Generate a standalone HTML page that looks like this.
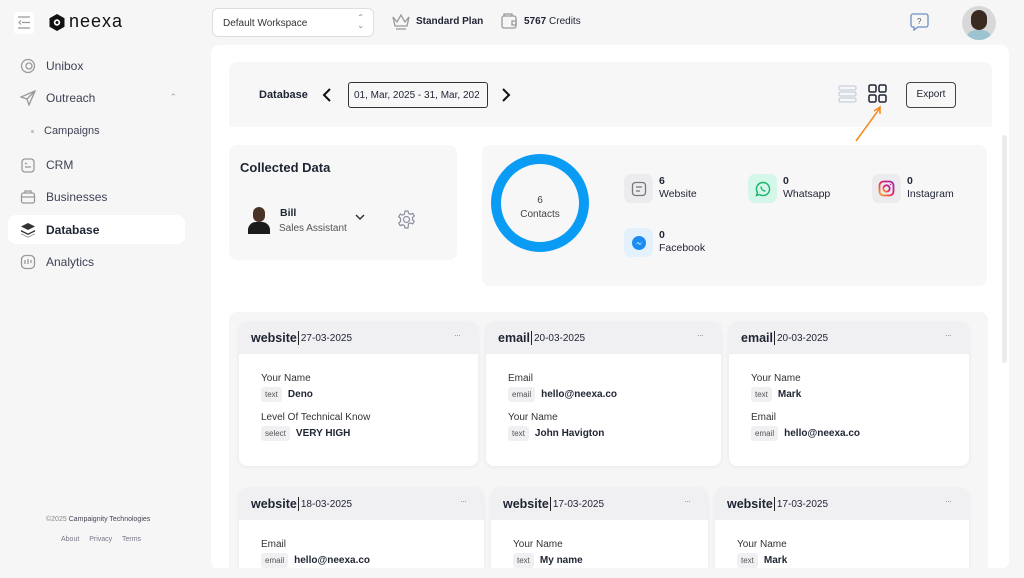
<!DOCTYPE html>
<html><head><meta charset="utf-8"><style>
*{box-sizing:border-box;margin:0;padding:0}
body{width:1024px;height:575px;overflow:hidden;background:#f6f6f7;font-family:"Liberation Sans",sans-serif;color:#1f2433;position:relative}
.a{position:absolute}
.nav{position:absolute;left:8px;width:177px;height:29px;display:flex;align-items:center;font-size:12px;color:#3d4254}
.nav svg{margin-left:12px;margin-right:10px}
.card{position:absolute;background:#fff;border-radius:8px;box-shadow:0 1px 4px rgba(0,0,0,.06);overflow:hidden}
.ch{height:32px;background:#f0f0f2;display:flex;align-items:center;padding-left:12px;font-size:12px;position:relative}
.ch b{font-weight:bold;font-size:12.5px;border-right:1.5px solid #222;padding-right:1px;margin-right:2px}
.ch span{font-size:10px}
.ch i{position:absolute;right:18px;top:8px;font-style:normal;color:#999;font-size:9px;letter-spacing:-1px}
.lb{font-size:10px;color:#333;margin:0 0 3px 22px}
.vl{margin-left:22px;display:flex;align-items:center;font-size:10px;font-weight:bold;margin-bottom:10px}
.tg{background:#f0f0f2;border-radius:3px;font-size:8px;font-weight:normal;color:#555;padding:3px 4px;margin-right:6px}
.st{position:absolute;display:flex}
.st .ic{width:29px;height:29px;border-radius:7px;display:flex;align-items:center;justify-content:center;margin-right:6px}
.st div.t{font-size:10.5px;line-height:13px;margin-top:1px}
</style></head><body>
<!-- top bar -->
<div class="a" style="left:14px;top:12px;width:20px;height:22px;background:#fff;border-radius:3px"></div>
<svg class="a" style="left:17px;top:16px" width="14" height="13" viewBox="0 0 14 13" fill="none" stroke="#999" stroke-width="1.2"><path d="M1 1h12M5 6.5h8M1 12h12M4 4.5L2 6.5l2 2"/></svg>
<svg class="a" style="left:48px;top:13px" width="18" height="19" viewBox="0 0 18 19"><path d="M9 1l7.5 4.2v8.6L9 18l-7.5-4.2V5.2z" fill="#111"/><circle cx="9" cy="9.5" r="3.2" fill="#fff"/><circle cx="9" cy="9.5" r="1.5" fill="#111"/></svg>
<div class="a" style="left:69px;top:11px;font-size:18px;letter-spacing:1px;color:#111">neexa</div>
<div class="a" style="left:212px;top:8px;width:162px;height:29px;border:1px solid #ddd;border-radius:6px;background:#fff;font-size:10px;color:#333;padding:9px 10px">Default Workspace<span style="position:absolute;right:9px;top:5px;font-size:8px;color:#888;line-height:8px">⌃<br>⌄</span></div>
<svg class="a" style="left:391px;top:13px" width="20" height="18" viewBox="0 0 20 18" fill="none" stroke="#999" stroke-width="1.3"><path d="M2 4l4 5 4-7 4 7 4-5-2 9H4z"/><path d="M5 16h10"/></svg>
<div class="a" style="left:416px;top:16px;font-size:10px;font-weight:bold">Standard Plan</div>
<svg class="a" style="left:500px;top:12px" width="18" height="18" viewBox="0 0 18 18" fill="none" stroke="#999" stroke-width="1.3"><rect x="2" y="4" width="14" height="12" rx="2"/><path d="M4 4V2h8v2M12 9h4v4h-4z"/></svg>
<div class="a" style="left:524px;top:16px;font-size:10px"><b>5767</b> Credits</div>
<svg class="a" style="left:910px;top:13px" width="19" height="18" viewBox="0 0 19 18" fill="none" stroke="#6d8fc8" stroke-width="1.3"><path d="M3 1h13a2 2 0 012 2v9a2 2 0 01-2 2H8l-4 3v-3H3a2 2 0 01-2-2V3a2 2 0 012-2z"/><text x="7" y="11" font-size="8" fill="#555" stroke="none" font-family="Liberation Sans">?</text></svg>
<div class="a" style="left:962px;top:6px;width:34px;height:34px;border-radius:50%;background:#d8d8d8;overflow:hidden"><div style="position:absolute;left:9px;top:4px;width:16px;height:20px;border-radius:8px;background:#3a2a22"></div><div style="position:absolute;left:4px;top:24px;width:26px;height:14px;border-radius:10px 10px 0 0;background:#9cc3cf"></div></div>
<!-- sidebar -->
<div class="nav" style="top:51px"><svg width="16" height="16" fill="none" stroke="#999" stroke-width="1.3"><circle cx="8" cy="8" r="6.5"/><circle cx="9" cy="8" r="3"/></svg>Unibox</div>
<div class="nav" style="top:83px"><svg width="16" height="16" fill="none" stroke="#999" stroke-width="1.3"><path d="M15 1L1 7l6 2 2 6z M7 9l8-8"/></svg>Outreach<span style="margin-left:auto;margin-right:8px;color:#aaa;font-size:9px">⌃</span></div>
<div class="a" style="left:31px;top:130px;width:3px;height:3px;border-radius:50%;background:#bbb"></div>
<div class="a" style="left:44px;top:125px;font-size:11px;color:#3d4254">Campaigns</div>
<div class="nav" style="top:150px"><svg width="16" height="16" fill="none" stroke="#999" stroke-width="1.3"><rect x="2" y="2" width="12" height="13" rx="3"/><path d="M5 10h6M5 6l2 1"/></svg>CRM</div>
<div class="nav" style="top:182px"><svg width="16" height="16" fill="none" stroke="#999" stroke-width="1.3"><rect x="1.5" y="4" width="13" height="10" rx="2"/><path d="M5 4V2h6v2M1.5 8h13"/></svg>Businesses</div>
<div class="nav" style="top:215px;background:#fff;border-radius:8px;font-weight:bold;color:#1f2433"><svg width="16" height="16" fill="#333"><path d="M8 1l7 3.5L8 8 1 4.5z"/><path d="M1 8l7 3.5L15 8v1.5L8 13 1 9.5z"/><path d="M1 11.5L8 15l7-3.5V12l-7 3.5L1 12z"/></svg>Database</div>
<div class="nav" style="top:247px"><svg width="16" height="16" fill="none" stroke="#999" stroke-width="1.3"><rect x="1.5" y="1.5" width="13" height="13" rx="4"/><path d="M5 6v4M8 5v5M11 6v3"/></svg>Analytics</div>
<div class="a" style="left:46px;top:516px;font-size:7px;color:#888">©2025 <span style="color:#445">Campaignity Technologies</span></div>
<div class="a" style="left:61px;top:536px;font-size:7px;color:#778;word-spacing:8px">About Privacy Terms</div>
<!-- main panel -->
<div class="a" style="left:211px;top:45px;width:798px;height:524px;background:#fff;border-radius:8px"></div>
<div class="a" style="left:229px;top:62px;width:763px;height:65px;background:#f7f7f8;border-radius:8px 8px 0 0"></div>
<div class="a" style="left:259px;top:89px;font-size:11px;font-weight:bold">Database</div>
<svg class="a" style="left:322px;top:87px" width="10" height="16" fill="none" stroke="#111" stroke-width="2"><path d="M8 2L2 8l6 6"/></svg>
<div class="a" style="left:348px;top:82px;width:140px;height:26px;border:1px solid #333;border-radius:3px;font-size:10px;padding:7px 5px;white-space:nowrap;overflow:hidden">01, Mar, 2025 - 31, Mar, 202</div>
<svg class="a" style="left:501px;top:87px" width="10" height="16" fill="none" stroke="#111" stroke-width="2"><path d="M2 2l6 6-6 6"/></svg>
<svg class="a" style="left:838px;top:85px" width="20" height="18" fill="none" stroke="#c9d0dc" stroke-width="1.3"><rect x="1" y="1" width="17" height="4" rx="1.5"/><rect x="1" y="7" width="17" height="4" rx="1.5"/><rect x="1" y="13" width="17" height="4" rx="1.5"/></svg>
<svg class="a" style="left:868px;top:84px" width="20" height="20" fill="none" stroke="#1f2433" stroke-width="1.5"><rect x="1" y="1" width="7" height="7" rx="1.5"/><rect x="11" y="1" width="7" height="7" rx="1.5"/><rect x="1" y="11" width="7" height="7" rx="1.5"/><rect x="11" y="11" width="7" height="7" rx="1.5"/></svg>
<div class="a" style="left:906px;top:82px;width:50px;height:26px;border:1px solid #444;border-radius:4px;font-size:10px;text-align:center;line-height:24px">Export</div>
<svg class="a" style="left:850px;top:103px" width="35" height="40" fill="none" stroke="#f28a1c" stroke-width="1.5"><path d="M6 38L30 5M24 8l6-4 0 7"/></svg>
<!-- collected data -->
<div class="a" style="left:229px;top:145px;width:228px;height:115px;background:#f7f7f8;border-radius:8px"></div>
<div class="a" style="left:240px;top:160px;font-size:13px;font-weight:bold">Collected Data</div>
<div class="a" style="left:247px;top:207px;width:24px;height:27px;overflow:hidden"><div style="position:absolute;left:6px;top:0;width:12px;height:15px;border-radius:6px;background:#4a3226"></div><div style="position:absolute;left:1px;top:15px;width:22px;height:14px;border-radius:8px 8px 0 0;background:#1b1b1b"></div></div>
<div class="a" style="left:280px;top:207px;font-size:10.5px;font-weight:bold">Bill</div>
<div class="a" style="left:279px;top:223px;font-size:10px;color:#555">Sales Assistant</div>
<svg class="a" style="left:355px;top:214px" width="10" height="7" fill="none" stroke="#333" stroke-width="1.5"><path d="M1 1l4 4 4-4"/></svg>
<svg class="a" style="left:397px;top:210px" width="19" height="19" fill="none" stroke="#8a8fa0" stroke-width="1.2"><circle cx="9.5" cy="9.5" r="3"/><path d="M8 1h3l.5 2.3 2 1 2.2-1 1.6 2.6-1.8 1.6v2.2l1.8 1.6-1.6 2.6-2.2-1-2 1L11 18H8l-.5-2.3-2-1-2.2 1-1.6-2.6 1.8-1.6V8.3L1.7 6.7l1.6-2.6 2.2 1 2-1z"/></svg>
<!-- stats -->
<div class="a" style="left:482px;top:145px;width:505px;height:141px;background:#f7f7f8;border-radius:8px"></div>
<div class="a" style="left:491px;top:154px;width:98px;height:98px;border-radius:50%;border:10px solid #0a9cf5"></div>
<div class="a" style="left:491px;top:194px;width:98px;text-align:center;font-size:10px;line-height:14px;color:#444">6<br>Contacts</div>
<div class="st" style="left:624px;top:174px"><div class="ic" style="background:#ececee"><svg width="16" height="16" fill="none" stroke="#777" stroke-width="1.3"><rect x="1.5" y="1.5" width="13" height="13" rx="3"/><path d="M5 6h6M5 10h4"/></svg></div><div class="t"><b>6</b><br>Website</div></div>
<div class="st" style="left:748px;top:174px"><div class="ic" style="background:#d4f7ea"><svg width="16" height="16" fill="none" stroke="#19b36b" stroke-width="1.4"><path d="M8 1.5a6.5 6.5 0 11-3.4 12L1.5 14.5l1-3A6.5 6.5 0 018 1.5z"/><path d="M6 5.5c0 2.5 2 4.5 4.5 4.5"/></svg></div><div class="t"><b>0</b><br>Whatsapp</div></div>
<div class="st" style="left:872px;top:174px"><div class="ic" style="background:#ececee"><svg width="17" height="17" fill="none" stroke-width="1.8"><defs><linearGradient id="g" x1="0" y1="1" x2="1" y2="0"><stop offset="0" stop-color="#f9a825"/><stop offset=".5" stop-color="#e91e63"/><stop offset="1" stop-color="#9c27b0"/></linearGradient></defs><rect x="1.5" y="1.5" width="14" height="14" rx="4" stroke="url(#g)"/><circle cx="8.5" cy="8.5" r="3.2" stroke="url(#g)"/><circle cx="12.6" cy="4.4" r=".8" fill="#c0268f"/></svg></div><div class="t"><b>0</b><br>Instagram</div></div>
<div class="st" style="left:624px;top:228px"><div class="ic" style="background:#e3f1fd"><svg width="16" height="16"><circle cx="8" cy="8" r="7" fill="#1b8cf2"/><path d="M4 10l3-3 2 2 3-3-3 4-2-2z" fill="#fff"/></svg></div><div class="t"><b>0</b><br>Facebook</div></div>
<!-- cards -->
<div class="a" style="left:229px;top:312px;width:759px;height:263px;background:#f6f6f7;border-radius:8px"></div>
<div class="card" style="left:239px;top:322px;width:239px;height:144px"><div class="ch"><b>website</b><span>27-03-2025</span><i>···</i></div><div style="height:19px"></div>
<div class="lb">Your Name</div><div class="vl"><span class="tg">text</span>Deno</div>
<div class="lb">Level Of Technical Know</div><div class="vl"><span class="tg">select</span>VERY HIGH</div></div>
<div class="card" style="left:486px;top:322px;width:235px;height:144px"><div class="ch"><b>email</b><span>20-03-2025</span><i>···</i></div><div style="height:19px"></div>
<div class="lb">Email</div><div class="vl"><span class="tg">email</span>hello@neexa.co</div>
<div class="lb">Your Name</div><div class="vl"><span class="tg">text</span>John Havigton</div></div>
<div class="card" style="left:729px;top:322px;width:240px;height:144px"><div class="ch"><b>email</b><span>20-03-2025</span><i>···</i></div><div style="height:19px"></div>
<div class="lb">Your Name</div><div class="vl"><span class="tg">text</span>Mark</div>
<div class="lb">Email</div><div class="vl"><span class="tg">email</span>hello@neexa.co</div></div>
<div class="card" style="left:239px;top:488px;width:245px;height:80px;border-radius:8px 8px 0 0"><div class="ch"><b>website</b><span>18-03-2025</span><i>···</i></div><div style="height:19px"></div>
<div class="lb">Email</div><div class="vl"><span class="tg">email</span>hello@neexa.co</div></div>
<div class="card" style="left:491px;top:488px;width:217px;height:80px;border-radius:8px 8px 0 0"><div class="ch"><b>website</b><span>17-03-2025</span><i>···</i></div><div style="height:19px"></div>
<div class="lb">Your Name</div><div class="vl"><span class="tg">text</span>My name</div></div>
<div class="card" style="left:715px;top:488px;width:254px;height:80px;border-radius:8px 8px 0 0"><div class="ch"><b>website</b><span>17-03-2025</span><i>···</i></div><div style="height:19px"></div>
<div class="lb">Your Name</div><div class="vl"><span class="tg">text</span>Mark</div></div>
<div class="a" style="left:0;top:568px;width:1024px;height:10px;background:#f6f6f7"></div>
<div class="a" style="left:1002px;top:135px;width:5px;height:228px;background:#ececec;border-radius:3px"></div>
</body></html>
